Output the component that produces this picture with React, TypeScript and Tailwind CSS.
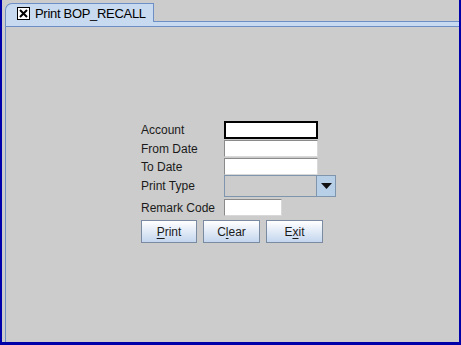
import React from 'react';

const field = 'h-[17px] bg-white border border-t-[#8a8a8a] border-l-[#8a8a8a] border-r-[#d8d8d8] border-b-[#d8d8d8]';

function Label({ children }: { children: React.ReactNode }) {
  return <div className="w-[83px] shrink-0 text-[12px] leading-none text-[#1a1a1a]">{children}</div>;
}

function Btn({ pre, key1, post, w }: { pre: string; key1: string; post: string; w: string }) {
  return (
    <button
      className={`${w} h-[23px] border border-[#7a8aa0] bg-gradient-to-b from-[#ffffff] to-[#c4d6ee] text-[12px] text-[#1a1a1a] flex items-center justify-center`}
    >
      {pre}
      <span className="underline underline-offset-2">{key1}</span>
      {post}
    </button>
  );
}

export default function App() {
  return (
    <div
      className="w-[461px] h-[345px] bg-[#cccccc] border-l-2 border-r-2 border-b-[3px] border-[#0000a8] flex flex-col pl-[3px] pt-[3px] overflow-hidden"
      style={{ fontFamily: '"Liberation Sans", Arial, sans-serif' }}
    >
      {/* tab strip */}
      <div className="flex h-[19px] shrink-0">
        <div className="w-[149px] h-full bg-[#c8daf0] border-t border-l border-r border-[#6d8fc6] rounded-tl-[7px] flex items-center pl-[11px] gap-[5px]">
          <div className="w-[13px] h-[13px] border border-black bg-white flex items-center justify-center">
            <svg width="9" height="9" viewBox="0 0 9 9">
              <path d="M1 1 L8 8 M8 1 L1 8" stroke="black" strokeWidth="2" />
            </svg>
          </div>
          <span className="text-[13px] text-black leading-none tracking-[-0.3px]">Print BOP_RECALL</span>
        </div>
        <div className="flex-1 border-b border-[#6d8fc6]" />
      </div>
      <div className="h-[5px] shrink-0 bg-[#c8daf0] border-b border-[#6d8fc6] border-l border-l-[#6d8fc6]" />

      {/* content */}
      <div className="flex-1 border-l border-[#6d8fc6] pl-[135px] pt-[94px]">
        <div className="flex flex-col">
          <div className="flex items-center h-[18px]">
            <Label>Account</Label>
            <div className="w-[94px] h-[18px] bg-white border-2 border-black" />
          </div>
          <div className="flex items-center h-[17px] mt-[1px]">
            <Label>From Date</Label>
            <div className={`w-[94px] ${field}`} />
          </div>
          <div className="flex items-center h-[17px] mt-[1px]">
            <Label>To Date</Label>
            <div className={`w-[94px] ${field}`} />
          </div>
          <div className="flex items-center h-[22px]">
            <Label>Print Type</Label>
            <div className="flex h-[22px]">
              <div className="w-[93px] h-full bg-[#cccccc] border border-[#7f95ad]" />
              <div className="w-[19px] h-full bg-[#b8cfe8] border border-l-0 border-[#7f95ad] flex items-center justify-center">
                <svg width="11" height="6" viewBox="0 0 11 6">
                  <path d="M0 0 L11 0 L5.5 6 Z" fill="#111" />
                </svg>
              </div>
            </div>
          </div>
          <div className="flex items-center h-[17px] mt-[2px]">
            <Label>Remark Code</Label>
            <div className={`w-[58px] ${field}`} />
          </div>
          <div className="flex gap-[6px] mt-[4px]">
            <Btn pre="" key1="P" post="rint" w="w-[56px]" />
            <Btn pre="C" key1="l" post="ear" w="w-[57px]" />
            <Btn pre="E" key1="x" post="it" w="w-[57px]" />
          </div>
        </div>
      </div>
    </div>
  );
}
